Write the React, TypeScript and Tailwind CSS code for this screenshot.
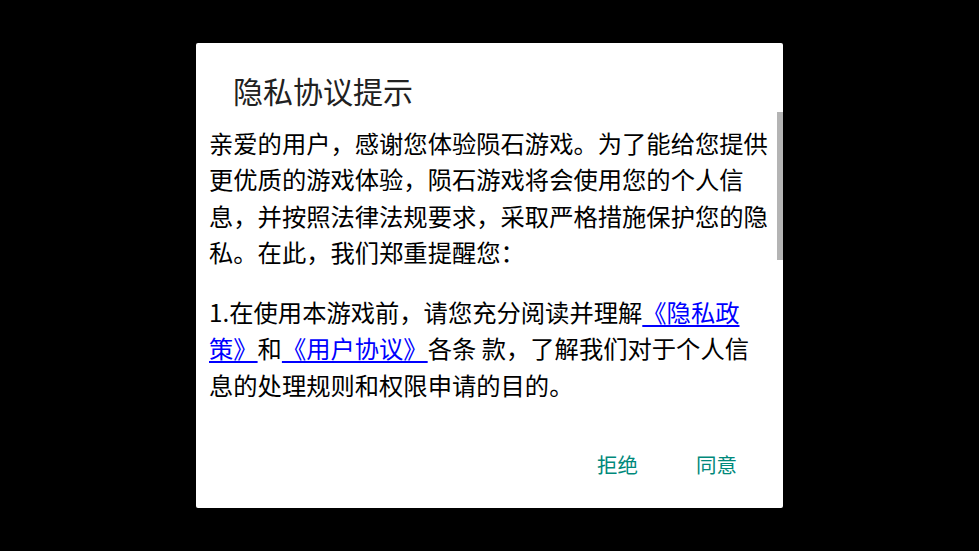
import React from "react";

const cjk = '"Noto Sans CJK SC", "Noto Sans", sans-serif';

function PolicyLink({ children }: { children: React.ReactNode }) {
  return <span className="text-[#0000ff] underline underline-offset-[3px]">{children}</span>;
}

export default function App() {
  return (
    <div className="w-[979px] h-[551px] bg-black flex items-center justify-center" style={{ fontFamily: cjk }}>
      <div className="w-[587px] h-[465px] bg-white rounded-[2px] flex flex-col">
        <div className="pt-[29px] pl-[37px] pb-[4px] text-[30px] leading-[36px] text-[#212121]">隐私协议提示</div>

        <div className="relative flex-1">
          <div className="absolute right-0 top-0 w-[6px] h-[148px] bg-[#b4b4b4]" />
          <div className="pt-[13px] pl-[13px] pr-[12px] text-[24.3px] leading-[1.5] text-black">
            <p>
              亲爱的用户，感谢您体验陨石游戏。为了能给您提供更优质的游戏体验，陨石游戏将会使用您的个人信息，并按照法律法规要求，采取严格措施保护您的隐私。在此，我们郑重提醒您：
            </p>
            <p className="mt-[23px]">
              1.在使用本游戏前，请您充分阅读并理解<PolicyLink>《隐私政策》</PolicyLink>和
              <PolicyLink>《用户协议》</PolicyLink>各条 款，了解我们对于个人信息的处理规则和权限申请的目的。
            </p>
          </div>
        </div>

        <div className="flex justify-end pr-[17px] pb-[30px] text-[20.5px] leading-[28px] text-[#00897b]">
          <button className="px-[29px]">拒绝</button>
          <button className="px-[29px]">同意</button>
        </div>
      </div>
    </div>
  );
}
